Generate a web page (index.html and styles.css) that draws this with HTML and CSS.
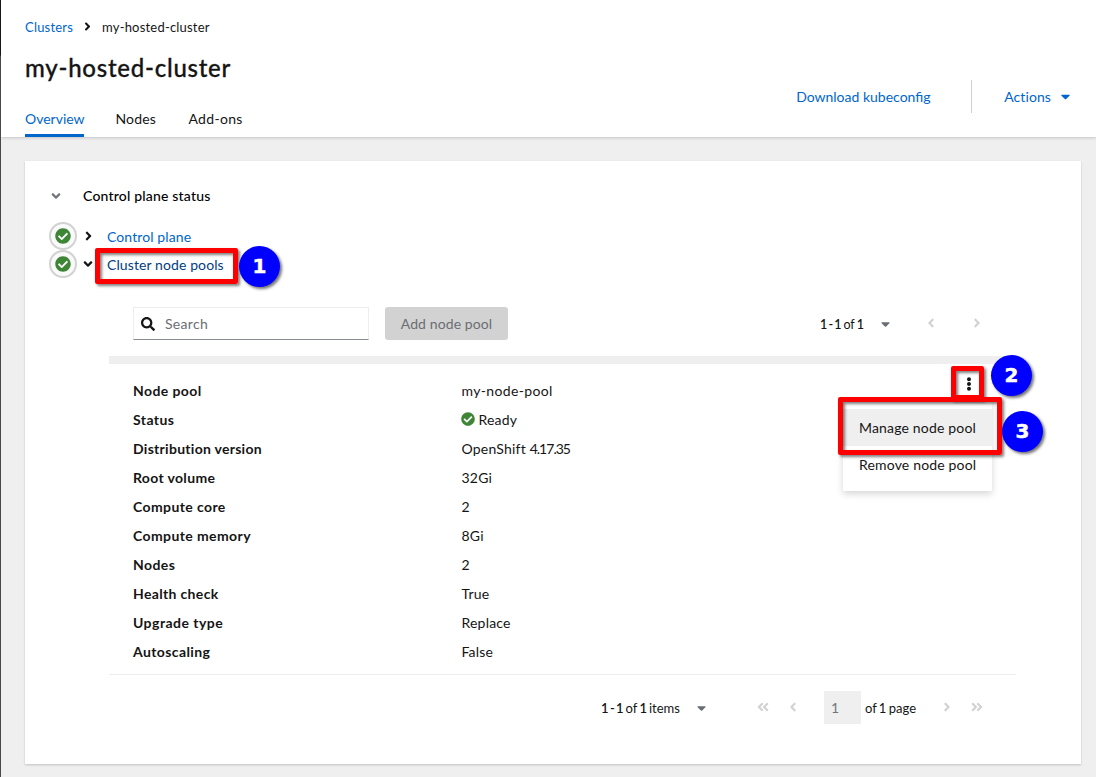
FILE: index.html
```html
<!DOCTYPE html>
<html lang="en">
<head>
<meta charset="utf-8">
<title>my-hosted-cluster</title>
<link rel="stylesheet" href="styles.css">
</head>
<body>
<svg class="defs" width="0" height="0">
  <symbol id="right" viewBox="0 0 256 512"><path d="M224.3 273l-136 136c-9.4 9.4-24.6 9.4-33.9 0l-22.6-22.6c-9.4-9.4-9.4-24.6 0-33.9l96.4-96.4-96.4-96.4c-9.4-9.4-9.4-24.6 0-33.9L54.3 103c9.4-9.4 24.6-9.4 33.9 0l136 136c9.5 9.4 9.5 24.6.1 34z"/></symbol>
  <symbol id="left" viewBox="0 0 256 512"><path d="M31.7 239l136-136c9.4-9.4 24.6-9.4 33.9 0l22.6 22.6c9.4 9.4 9.4 24.6 0 33.9L127.9 256l96.4 96.4c9.4 9.4 9.4 24.6 0 33.9L201.7 409c-9.4 9.4-24.6 9.4-33.9 0l-136-136c-9.5-9.4-9.5-24.6-.1-34z"/></symbol>
  <symbol id="down" viewBox="0 0 320 512"><path d="M143 352.3L7 216.3c-9.4-9.4-9.4-24.6 0-33.9l22.6-22.6c9.4-9.4 24.6-9.4 33.9 0l96.4 96.4 96.4-96.4c9.4-9.4 24.6-9.4 33.9 0l22.6 22.6c9.4 9.4 9.4 24.6 0 33.9l-136 136c-9.2 9.4-24.4 9.4-33.8 0z"/></symbol>
  <symbol id="caret" viewBox="0 0 320 512"><path d="M31.3 192h257.3c17.8 0 26.7 21.5 14.1 34.1L174.1 354.8c-7.8 7.8-20.5 7.8-28.3 0L17.2 226.1C4.6 213.5 13.5 192 31.3 192z"/></symbol>
  <symbol id="dright" viewBox="0 0 448 512"><path d="M224.3 273l-136 136c-9.4 9.4-24.6 9.4-33.9 0l-22.6-22.6c-9.4-9.4-9.4-24.6 0-33.9l96.4-96.4-96.4-96.4c-9.4-9.4-9.4-24.6 0-33.9L54.3 103c9.4-9.4 24.6-9.4 33.9 0l136 136c9.5 9.4 9.5 24.6.1 34zm192-34l-136-136c-9.4-9.4-24.6-9.4-33.9 0l-22.6 22.6c-9.4 9.4-9.4 24.6 0 33.9l96.4 96.4-96.4 96.4c-9.4 9.4-9.4 24.6 0 33.9l22.6 22.6c9.4 9.4 24.6 9.4 33.9 0l136-136c9.4-9.2 9.4-24.4 0-33.8z"/></symbol>
  <symbol id="check" viewBox="0 0 512 512"><path d="M504 256c0 136.967-111.033 248-248 248S8 392.967 8 256 119.033 8 256 8s248 111.033 248 248zM227.314 387.314l184-184c6.248-6.248 6.248-16.379 0-22.627l-22.627-22.627c-6.248-6.249-16.379-6.249-22.628 0L216 308.118l-70.059-70.059c-6.248-6.248-16.379-6.248-22.628 0l-22.627 22.627c-6.248 6.248-6.248 16.379 0 22.627l104 104c6.249 6.249 16.379 6.249 22.628.001z"/></symbol>
  <symbol id="search" viewBox="0 0 512 512"><path d="M505 442.7L405.3 343c-4.500-4.500-10.600-7-17-7H372c27.600-35.300 44-79.700 44-128C416 93.100 322.900 0 208 0S0 93.100 0 208s93.100 208 208 208c48.300 0 92.700-16.400 128-44v16.300c0 6.400 2.500 12.500 7 17l99.700 99.700c9.400 9.400 24.600 9.400 33.900 0l28.300-28.300c9.400-9.400 9.400-24.600.1-34zM208 336c-70.700 0-128-57.200-128-128 0-70.700 57.200-128 128-128 70.700 0 128 57.200 128 128 0 70.700-57.200 128-128 128z"/></symbol>
  <symbol id="kebab" viewBox="0 0 192 512"><path d="M96 184c39.800 0 72 32.200 72 72s-32.200 72-72 72-72-32.200-72-72 32.200-72 72-72zM24 80c0 39.800 32.200 72 72 72s72-32.200 72-72S135.800 8 96 8 24 40.200 24 80zm0 352c0 39.800 32.200 72 72 72s72-32.200 72-72-32.200-72-72-72-72 32.200-72 72z"/></symbol>
</svg>
<div class="page">
  <header class="header">
    <div class="heading">
      <nav class="breadcrumb"><a>Clusters</a><svg class="chev"><use href="#right"/></svg><span>my-hosted-cluster</span></nav>
      <h1 class="title">my-hosted-cluster</h1>
      <nav class="tabs"><a class="tab active">Overview</a><a class="tab nodes">Nodes</a><a class="tab addons">Add-ons</a></nav>
    </div>
    <div class="header-actions"><a class="download">Download kubeconfig</a><a class="actions"><span>Actions</span><svg class="caret"><use href="#caret"/></svg></a></div>
  </header>
  <main class="card">
    <div class="section-head"><svg class="chev-down"><use href="#down"/></svg><span>Control plane status</span></div>
    <div class="status-row"><span class="ring"><svg><use href="#check"/></svg></span><svg class="chev"><use href="#right"/></svg><a class="cp">Control plane</a></div>
    <div class="status-row"><span class="ring"><svg><use href="#check"/></svg></span><svg class="chev-down"><use href="#down"/></svg><a class="np">Cluster node pools</a></div>
    <section class="pool">
      <div class="toolbar">
        <div class="search"><svg><use href="#search"/></svg><span>Search</span></div>
        <button class="add" disabled>Add node pool</button>
        <div class="pager-top"><span class="count"><b>1 - 1</b> of <b>1</b></span><svg class="caret"><use href="#caret"/></svg><svg class="arrow prev"><use href="#left"/></svg><svg class="arrow next"><use href="#right"/></svg></div>
      </div>
      <dl class="details">
        <dt class="l1">Node pool</dt><dd class="v1">my-node-pool</dd>
        <dt class="l2">Status</dt><dd class="v2"><svg><use href="#check"/></svg><span>Ready</span></dd>
        <dt class="l3">Distribution version</dt><dd class="v3">OpenShift <span class="ver">4.17.35</span></dd>
        <dt class="l4">Root volume</dt><dd>32Gi</dd>
        <dt class="l5">Compute core</dt><dd>2</dd>
        <dt class="l6">Compute memory</dt><dd>8Gi</dd>
        <dt class="l7">Nodes</dt><dd>2</dd>
        <dt class="l8">Health check</dt><dd class="v8">True</dd>
        <dt class="l9">Upgrade type</dt><dd class="v9">Replace</dd>
        <dt class="l10">Autoscaling</dt><dd class="v10">False</dd>
      </dl>
      <footer class="pager-bottom">
        <span class="count"><b>1 - 1</b> of <b>1</b> items</span><svg class="caret"><use href="#caret"/></svg><svg class="double flip"><use href="#dright"/></svg><svg class="arrow"><use href="#left"/></svg><span class="pagebox">1</span><span class="pages">of 1 page</span><svg class="arrow n"><use href="#right"/></svg><svg class="double"><use href="#dright"/></svg>
      </footer>
    </section>
  </main>
  <div class="menu"><div class="item hover">Manage node pool</div><div class="item">Remove node pool</div></div>
  <svg class="kebab"><use href="#kebab"/></svg>
  <div class="mark m1"></div><div class="mark m2"></div><div class="mark m3"></div>
  <div class="badge b1">1</div><div class="badge b2">2</div><div class="badge b3">3</div>
</div>
</body>
</html>
```
FILE: styles.css
```css
* { box-sizing: border-box; }
body { margin: 0; font: 14px/20px Lato, sans-serif; color: #151515; background: #efefef; }
svg { fill: currentColor; flex: none; }
.defs { position: absolute; }
.page { position: relative; width: 1096px; height: 777px; overflow: hidden; border-left: 1px solid #45484c; border-image: linear-gradient(#15171b 0 56px, #45484c 57px) 1; }
.header { position: relative; height: 137px; padding-left: 24px; display: flex; justify-content: space-between; background: #fff; box-shadow: 0 1px 3px rgba(3,3,3,.18); }
a { color: #06c; }
.breadcrumb { display: flex; align-items: center; height: 20px; margin-top: 17px; font-size: 13px; letter-spacing: .2px; }
.breadcrumb a { width: 48px; }
.chev { width: 6px; height: 12px; }
.breadcrumb .chev { width: 7px; height: 13px; margin: 0 11px 0 11px; position: relative; top: -1px; }
.title { margin: 16px 0 0; font-size: 24px; line-height: 30px; font-weight: 500; letter-spacing: .75px; white-space: nowrap; -webkit-text-stroke: .3px; }
.tabs { display: flex; margin-top: 26px; height: 28px; }
.tab { color: #151515; white-space: nowrap; }
.active { color: #06c; width: 59px; border-bottom: 3px solid #06c; }
.nodes { margin-left: 31.500px; width: 41px; letter-spacing: .15px; }
.addons { margin-left: 32px; letter-spacing: .3px; }
.header-actions { display: flex; height: 33px; margin: 80px 26px 0 0; line-height: 34px; white-space: nowrap; }
.download { width: 175px; }
.actions { border-left: 1px solid #d2d2d2; padding-left: 32px; display: flex; align-items: center; letter-spacing: .1px; }
.caret { width: 9px; height: 14px; }
.actions .caret { width: 9px; height: 15px; margin-left: 10px; }
.card { width: 1056px; height: 603px; margin: 24px 0 0 24px; padding: 25px 65px 0 24px; background: #fff; box-shadow: 0 1px 2px rgba(3,3,3,.2); }
.section-head { display: flex; align-items: center; height: 20px; margin-bottom: 16px; color: #000; font-weight: 500; letter-spacing: .19px; }
.chev-down { width: 10px; height: 14px; color: #151515; }
.section-head .chev-down { color: #72767b; margin: 0 22px 0 2px; }
.status-row { display: flex; align-items: center; height: 28px; white-space: nowrap; }
.status-row a { position: relative; top: 1px; letter-spacing: .1px; }
.ring { width: 28px; height: 28px; border: 2px solid #d2d2d2; border-radius: 50%; background: #fafafa; display: grid; place-items: center; color: #3e8635; }
.ring svg { width: 16px; height: 16px; }
.status-row .chev { width: 7px; height: 14px; margin: 0 15px 0 8px; }
.status-row .chev-down { margin: 0 14px 0 6px; }
.np { color: #004080; }
.pool { width: 907px; margin: 29px 0 0 60px; }
.toolbar { display: flex; align-items: center; height: 49px; padding: 0 0 16px 24px; white-space: nowrap; }
.search { width: 236px; height: 33px; border: 1px solid #ededed; border-bottom-color: #8a8d90; display: flex; align-items: center; padding-left: 7px; color: #6a6e73; letter-spacing: .3px; }
.search svg { width: 14px; height: 14px; margin-right: 10px; color: #151515; }
.add { width: 123px; height: 33px; margin-left: 16px; border: 0; border-radius: 3px; background: #d2d2d2; color: #6a6e73; font: 14px/34px Lato, sans-serif; padding: 0; letter-spacing: .1px; }
.pager-top { display: flex; align-items: center; margin-left: 312px; font-size: 12.500px; }
.count { width: 61px; position: relative; top: 1px; word-spacing: -.9px; }
.count b { font-weight: 600; letter-spacing: -.5px; }
.pager-top .caret, .pager-bottom .caret { color: #6a6e73; }
.arrow { width: 8px; height: 14px; color: #d2d2d2; }
.prev { margin: -2px 0 0 37px; }
.next { margin: -2px 0 0 38px; }
.details { margin: 0; border-top: 8px solid #efefef; border-bottom: 1px solid #ededed; height: 319px; padding: 12px 0 0 24px; display: grid; grid-template-columns: 328.500px 1fr; grid-auto-rows: 29px; line-height: 29px; }
.details dt { font-weight: 700; letter-spacing: .4px; }
.details .l3 { letter-spacing: .28px; }
.details .l4, .details .l8 { letter-spacing: .34px; }
.details .l9 { letter-spacing: .46px; }
.details dd { margin: 0; display: flex; align-items: center; white-space: pre; letter-spacing: .2px; }
.details .v1 { letter-spacing: .35px; }
.details .ver { letter-spacing: -.98px; }
.v2 svg { width: 14px; height: 14px; margin: -2px 4px 0 -1px; color: #3e8635; }
.pager-bottom { display: flex; align-items: center; height: 33px; margin-top: 16px; padding-left: 492px; font-size: 13px; white-space: nowrap; }
.pager-bottom .count { width: 96px; top: 0; }
.double { width: 12px; height: 14px; color: #d2d2d2; }
.flip { transform: scaleX(-1); margin: 0 20px 0 51px; }
.pager-bottom .arrow, .double { position: relative; top: -1px; }
.pagebox { width: 37px; height: 33px; background: #efefef; margin-left: 27px; padding-left: 7px; line-height: 34px; font-size: 14px; color: #72767b; }
.pages { width: 82px; padding-left: 4px; word-spacing: -1px; }
.n { margin-right: 20px; }
.menu { position: absolute; left: 842px; top: 401px; width: 149px; height: 90px; padding-top: 8px; background: #fff; box-shadow: 0 3px 7px rgba(3,3,3,.16); }
.item { height: 37px; line-height: 38px; padding-left: 16px; white-space: nowrap; letter-spacing: .17px; }
.hover { background: #efefef; }
.kebab { position: absolute; left: 965px; top: 377px; width: 6px; height: 14px; }
.mark { position: absolute; border: 5px solid #f00; border-radius: 2px; box-shadow: 2px 2px 3px rgba(0,0,0,.5), inset 2px 2px 3px rgba(0,0,0,.5); }
.m1 { left: 94px; top: 248px; width: 143px; height: 36px; }
.m2 { left: 950px; top: 366px; width: 33px; height: 34px; }
.m3 { left: 837px; top: 397px; width: 164px; height: 58px; }
.badge { position: absolute; width: 41px; height: 41px; border-radius: 50%; background: #00f; color: #fff; font: 700 20px/41px "DejaVu Sans", sans-serif; text-align: center; box-shadow: 2px 2px 3px rgba(0,0,0,.55); -webkit-text-stroke: .5px; }
.b1 { left: 238px; top: 246px; }
.b2 { left: 990px; top: 355px; }
.b3 { left: 1001px; top: 411px; }
```
